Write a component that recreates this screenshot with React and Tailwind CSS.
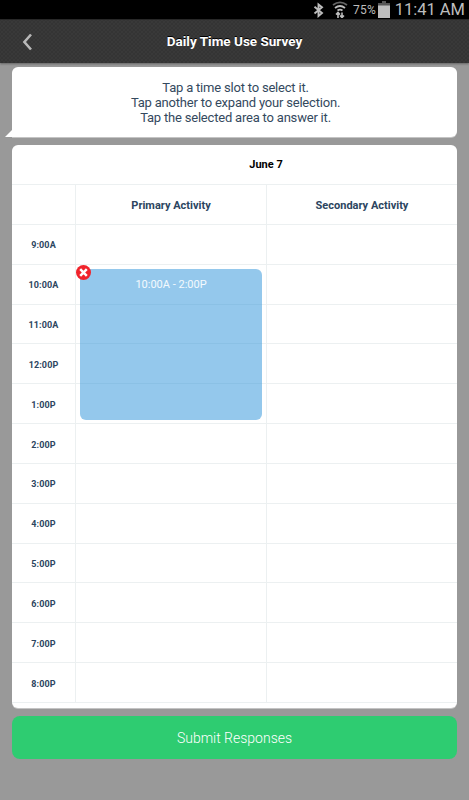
const HOURS = [
  '9:00A', '10:00A', '11:00A', '12:00P', '1:00P', '2:00P',
  '3:00P', '4:00P', '5:00P', '6:00P', '7:00P', '8:00P',
];

function StatusBar() {
  return (
    <div className="h-[19px] bg-black flex items-center justify-end pr-[4px] text-[#bdbdbd]">
      <svg className="w-[11px] h-[16px] mr-[8px]" viewBox="0 0 11 16" fill="none" stroke="currentColor" strokeWidth="1.9">
        <path d="M1.5 4.8 L9 11 L5.5 14 V2.4 L9 5.2 L1.5 11.4" />
      </svg>
      <svg className="w-[16px] h-[17px]" viewBox="0 0 16 17" fill="none" stroke="currentColor">
        <path d="M1 4 Q8 -1.2 15 4" strokeWidth="1.8" stroke="#666" />
        <path d="M3 7 Q8 3 13 7" strokeWidth="1.8" />
        <path d="M5.5 9.5 Q8 7.6 10.5 9.5" strokeWidth="1.7" />
        <path d="M6 17 V11.5 M4 13.5 L6 11.5 L8 13.5 M10 11.5 V16.5 M8 14.5 L10 16.5 L12 14.5" strokeWidth="1.6" />
      </svg>
      <span className="w-[28px] text-right text-[12px] leading-[19px] pt-px mr-[2px] tracking-[0.2px]">75%</span>
      <svg className="w-[12px] h-[17px]" viewBox="0 0 12 17">
        <path d="M4 0h4v2h4v3H0V2h4z" fill="#555" />
        <path d="M0 4.5h12v12.5H0z" fill="#bdbdbd" />
      </svg>
      <span className="w-[75px] text-right whitespace-nowrap text-[16.5px] leading-[19px]">11:41 AM</span>
    </div>
  );
}

function Header() {
  return (
    <header className="h-[44px] relative flex items-center justify-center bg-[#3b3b3b] bg-[radial-gradient(#343434_28%,transparent_60%),radial-gradient(#343434_28%,transparent_60%)] bg-[size:4px_4px] bg-[position:0_0,2px_2px] border-t border-[#282828] shadow-[0_1px_2px_rgba(0,0,0,0.35)]">
      <svg className="absolute left-[22px] top-[13px] w-[11px] h-[18px]" viewBox="0 0 11 18" fill="none" stroke="#b8b8b8" strokeWidth="2.6">
        <path d="M9 1.5 L2.4 9 L9 16.5" />
      </svg>
      <h1 className="text-[13.5px] font-bold text-white [text-shadow:0_-1px_0_#000]">Daily Time Use Survey</h1>
    </header>
  );
}

function Instructions() {
  return (
    <div className="relative h-[70px] rounded-md rounded-bl-none bg-white shadow-[0_1px_0_#c4c4c4] pt-[13px] pl-[2px] text-center text-[13px] leading-[15px] tracking-[-0.2px] text-[#34495e]">
      <p>Tap a time slot to select it.</p>
      <p>Tap another to expand your selection.</p>
      <p>Tap the selected area to answer it.</p>
      {/* Speech bubble tail */}
      <svg className="absolute -left-[7px] bottom-0 w-[7px] h-[7px]" viewBox="0 0 7 7">
        <path d="M7 0v7H0z" fill="#fff" />
      </svg>
    </div>
  );
}

function Selection() {
  return (
    <div className="absolute left-[68px] top-[124px] w-[182px] h-[151px] rounded-md bg-[#3498db]/53 pt-[8px] text-center text-[11px] leading-[16px] text-white/90">
      10:00A - 2:00P
      <svg className="absolute -left-[4px] -top-[4px] w-[15px] h-[15px]" viewBox="0 0 15 15">
        <circle cx="7.5" cy="7.5" r="7.5" fill="#f0232b" />
        <path d="M4.2 4.2l6.6 6.6M10.8 4.2l-6.6 6.6" stroke="#fff" strokeWidth="2.5" />
      </svg>
    </div>
  );
}

function Schedule() {
  return (
    <div className="relative h-[563px] rounded-md bg-white shadow-[0_1px_0_#c4c4c4] text-[#2c4560]">
      <div className="h-[40px] pl-[63px] pt-[2px] border-b border-[#ecf0f1] flex items-center justify-center text-[11px] font-bold text-black">
        June 7
      </div>
      <div className="h-[39.85px] grid grid-cols-[64px_191px_1fr] text-[11px] font-bold text-center leading-[36px]">
        <div className="border-r border-b border-[#ecf0f1]" />
        <div className="border-r border-b border-[#ecf0f1] pt-[2.5px]">Primary Activity</div>
        <div className="border-b border-[#ecf0f1] pt-[2.5px]">Secondary Activity</div>
      </div>
      {HOURS.map((hour) => (
        <div key={hour} className="h-[39.85px] grid grid-cols-[64px_191px_1fr]">
          <div className="border-r border-b border-[#ecf0f1] pt-[2.5px] text-center text-[9px] font-bold leading-[36px] tracking-[0.1px]">{hour}</div>
          <div className="border-r border-b border-[#ecf0f1]" />
          <div className="border-b border-[#ecf0f1]" />
        </div>
      ))}
      <Selection />
    </div>
  );
}

export default function App() {
  return (
    <div className="h-[800px] w-[469px] overflow-hidden bg-[#999] font-[Roboto,sans-serif]">
      <StatusBar />
      <Header />
      <main className="flex flex-col gap-[8px] px-[12px] pt-[4px]">
        <Instructions />
        <Schedule />
        <button className="h-[43px] pt-[2px] rounded-lg bg-[#2ecc71] text-[14px] font-light text-white">Submit Responses</button>
      </main>
    </div>
  );
}
